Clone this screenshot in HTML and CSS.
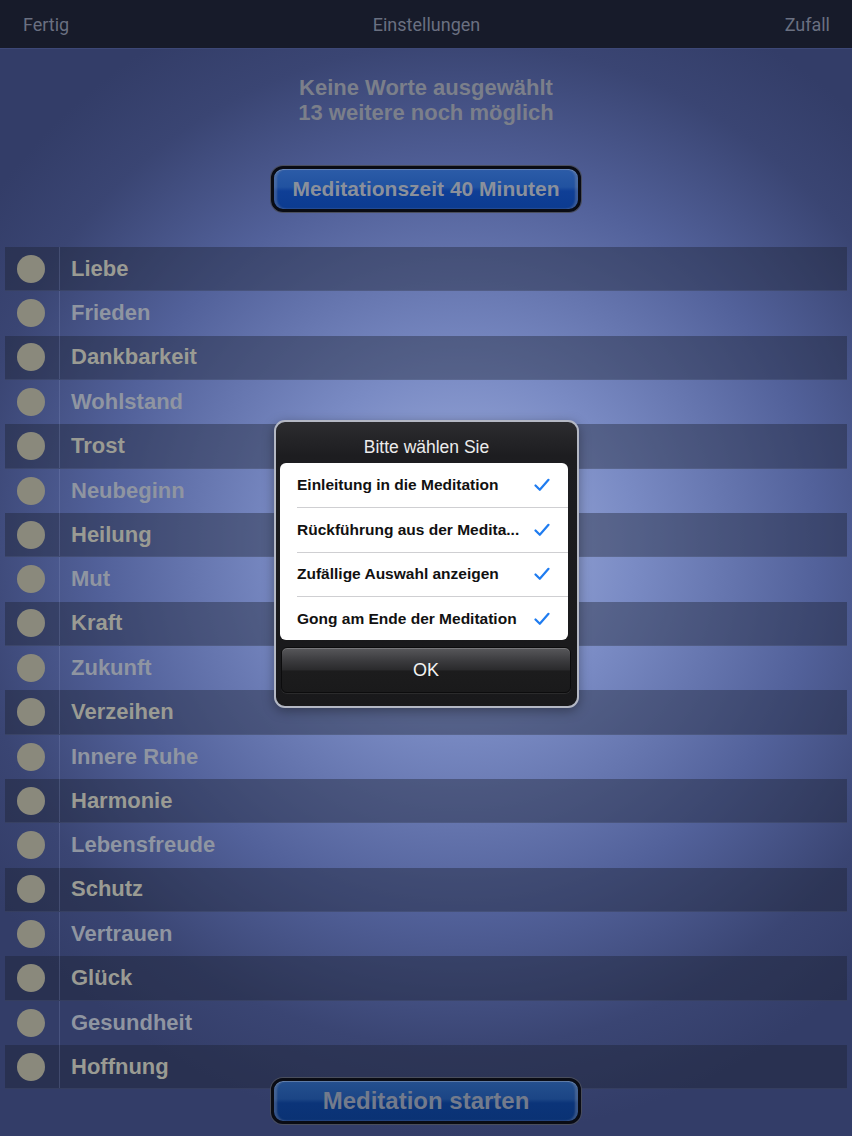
FILE: index.html
```html
<!DOCTYPE html>
<html lang="de">
<head>
    <meta charset="UTF-8">
    <meta name="viewport" content="width=device-width, initial-scale=1.0">
    <title>Einstellungen</title>
    <link rel="stylesheet" href="styles.css">
</head>
<body>
    <div class="screen">
        <header class="topbar">
            <span class="nav-left">Fertig</span>
            <span class="nav-title">Einstellungen</span>
            <span class="nav-right">Zufall</span>
        </header>

        <div class="status">
            <p>Keine Worte ausgewählt</p>
            <p>13 weitere noch möglich</p>
        </div>

        <button class="glossy time-btn">Meditationszeit 40 Minuten</button>

        <ul class="words">
            <li class="word dark"><span class="dot-cell"><i class="dot"></i></span><span class="label">Liebe</span></li>
            <li class="word"><span class="dot-cell"><i class="dot"></i></span><span class="label">Frieden</span></li>
            <li class="word dark"><span class="dot-cell"><i class="dot"></i></span><span class="label">Dankbarkeit</span></li>
            <li class="word"><span class="dot-cell"><i class="dot"></i></span><span class="label">Wohlstand</span></li>
            <li class="word dark"><span class="dot-cell"><i class="dot"></i></span><span class="label">Trost</span></li>
            <li class="word"><span class="dot-cell"><i class="dot"></i></span><span class="label">Neubeginn</span></li>
            <li class="word dark"><span class="dot-cell"><i class="dot"></i></span><span class="label">Heilung</span></li>
            <li class="word"><span class="dot-cell"><i class="dot"></i></span><span class="label">Mut</span></li>
            <li class="word dark"><span class="dot-cell"><i class="dot"></i></span><span class="label">Kraft</span></li>
            <li class="word"><span class="dot-cell"><i class="dot"></i></span><span class="label">Zukunft</span></li>
            <li class="word dark"><span class="dot-cell"><i class="dot"></i></span><span class="label">Verzeihen</span></li>
            <li class="word"><span class="dot-cell"><i class="dot"></i></span><span class="label">Innere Ruhe</span></li>
            <li class="word dark"><span class="dot-cell"><i class="dot"></i></span><span class="label">Harmonie</span></li>
            <li class="word"><span class="dot-cell"><i class="dot"></i></span><span class="label">Lebensfreude</span></li>
            <li class="word dark"><span class="dot-cell"><i class="dot"></i></span><span class="label">Schutz</span></li>
            <li class="word"><span class="dot-cell"><i class="dot"></i></span><span class="label">Vertrauen</span></li>
            <li class="word dark"><span class="dot-cell"><i class="dot"></i></span><span class="label">Glück</span></li>
            <li class="word"><span class="dot-cell"><i class="dot"></i></span><span class="label">Gesundheit</span></li>
            <li class="word dark"><span class="dot-cell"><i class="dot"></i></span><span class="label">Hoffnung</span></li>
        </ul>

        <button class="glossy start-btn">Meditation starten</button>

        <!-- options alert -->
        <div class="alert">
            <div class="alert-title">Bitte wählen Sie</div>
            <ul class="options">
                <li class="option"><span>Einleitung in die Meditation</span>
                    <svg class="check" viewBox="0 0 16 14"><path d="M1.5 7.5 L5.8 11.8 L14.5 1.8"/></svg></li>
                <li class="option"><span>Rückführung aus der Medita...</span>
                    <svg class="check" viewBox="0 0 16 14"><path d="M1.5 7.5 L5.8 11.8 L14.5 1.8"/></svg></li>
                <li class="option"><span>Zufällige Auswahl anzeigen</span>
                    <svg class="check" viewBox="0 0 16 14"><path d="M1.5 7.5 L5.8 11.8 L14.5 1.8"/></svg></li>
                <li class="option"><span>Gong am Ende der Meditation</span>
                    <svg class="check" viewBox="0 0 16 14"><path d="M1.5 7.5 L5.8 11.8 L14.5 1.8"/></svg></li>
            </ul>
            <button class="alert-ok">OK</button>
        </div>
    </div>
</body>
</html>
```

FILE: styles.css
```css
body {
    margin: 0;
    padding: 0;
    font-family: 'Liberation Sans', Arial, sans-serif;
    overflow: hidden;
    background-color: #2c3560;
}
.screen {
    position: relative;
    width: 852px;
    height: 1136px;
    overflow: hidden;
    display: flex;
    flex-direction: column;
    align-items: center;
    background: radial-gradient(ellipse 68% 52% at 54% 48%, #a3b2e0 0%, #7a8bc4 30%, #52619a 62%, #3a4573 85%, #333d68 100%);
}

/* Top navigation */
.topbar {
    align-self: stretch;
    height: 48px;
    display: grid;
    grid-template-columns: 1fr auto 1fr;
    align-items: center;
    padding: 0 22px 0 23px;
    background-color: #171b2a;
    border-bottom: 1px solid #3d4877;
    font-family: 'Roboto', 'Liberation Sans', sans-serif;
    font-size: 18px;
    color: #6a7081;
}
.nav-right { text-align: right; }

.status {
    margin-top: 26px;
    text-align: center;
}
.status p {
    margin: 0;
    font-size: 22px;
    line-height: 25px;
    font-weight: bold;
    color: #7b7f8a;
}

/* Glossy blue buttons */
.glossy {
    width: 310px;
    height: 46px;
    border: 3px solid #0a0c14;
    border-radius: 12px;
    box-shadow: 0 0 0 1px #4a4e5c, inset 0 1px 0 rgba(255, 255, 255, 0.2), inset 3px 0 2px rgba(140, 150, 170, 0.35), inset -3px 0 2px rgba(140, 150, 170, 0.35);
    background: linear-gradient(to bottom, #2c5ca8 0%, #2152a0 45%, #0f3f96 55%, #0c3b90 100%);
    font-family: 'Liberation Sans', Arial, sans-serif;
    font-weight: bold;
    color: #8a909b;
    padding: 0;
    cursor: pointer;
}
.time-btn {
    margin-top: 41px;
    font-size: 21px;
}
.start-btn {
    position: absolute;
    left: 271px;
    bottom: 12px;
    font-size: 24px;
    color: #737b8c;
    background: linear-gradient(to bottom, #24508f 0%, #1b4585 45%, #0b3479 55%, #0a3274 100%);
}

/* Word list */
.words {
    list-style: none;
    margin: 35px 5px 0;
    padding: 0;
    align-self: stretch;
}
.word {
    height: 44.33px;
    display: flex;
    align-items: center;
    box-sizing: border-box;
}
.word.dark {
    background-color: rgba(28, 32, 48, 0.4);
    border-bottom: 1px solid rgba(140, 155, 200, 0.12);
}
.dot-cell {
    width: 55px;
    height: 100%;
    display: flex;
    align-items: center;
    justify-content: center;
    border-right: 1px solid rgba(150, 165, 210, 0.22);
    box-sizing: border-box;
}
.dot {
    width: 28px;
    height: 28px;
    border-radius: 50%;
    background-color: #8a897c;
    margin-left: -2px;
}
.label {
    padding-left: 11px;
    font-size: 22px;
    font-weight: bold;
    color: #9a9b93;
}
.word:not(.dark) .label {
    color: #8f95a1;
}

/* Alert */
.alert {
    position: absolute;
    left: 274px;
    top: 420px;
    width: 305px;
    height: 288px;
    box-sizing: border-box;
    border: 2px solid #b4b8c4;
    border-radius: 11px;
    padding-left: 4px;
    background: linear-gradient(to bottom, #2c2c2f 0%, #1d1d20 12%, #19191b 100%);
    box-shadow: 0 3px 12px rgba(0, 0, 0, 0.35);
    display: flex;
    flex-direction: column;
    align-items: flex-start;
}
.alert-title {
    align-self: center;
    height: 41px;
    line-height: 50px;
    font-size: 17.5px;
    color: #ececec;
    margin-left: -4px;
}
.options {
    list-style: none;
    margin: 0;
    padding: 0 0 0 17px;
    width: 288px;
    box-sizing: border-box;
    background-color: #fff;
    border-radius: 6px;
}
.option {
    height: 44.3px;
    display: flex;
    align-items: center;
    justify-content: space-between;
    padding-right: 18px;
    border-top: 1px solid #cfcfd2;
    box-sizing: border-box;
    font-size: 15.5px;
    font-weight: bold;
    color: #111;
}
.option:first-child {
    border-top: none;
}
.check {
    width: 16px;
    height: 14px;
    fill: none;
    stroke: #1f7cf0;
    stroke-width: 2.2;
    stroke-linecap: round;
    stroke-linejoin: round;
}
.alert-ok {
    margin: 7px 0 0 1px;
    width: 290px;
    height: 46px;
    border: 1px solid #0c0c0d;
    border-radius: 6px;
    background: linear-gradient(to bottom, #58585b 0%, #3a3a3d 30%, #2a2a2c 50%, #1c1c1d 52%, #1a1a1b 100%);
    box-shadow: inset 0 1px 0 rgba(255, 255, 255, 0.2), 0 1px 0 rgba(255, 255, 255, 0.08);
    font-family: 'Liberation Sans', Arial, sans-serif;
    font-size: 18px;
    color: #f2f2f2;
    padding: 0;
}
```
